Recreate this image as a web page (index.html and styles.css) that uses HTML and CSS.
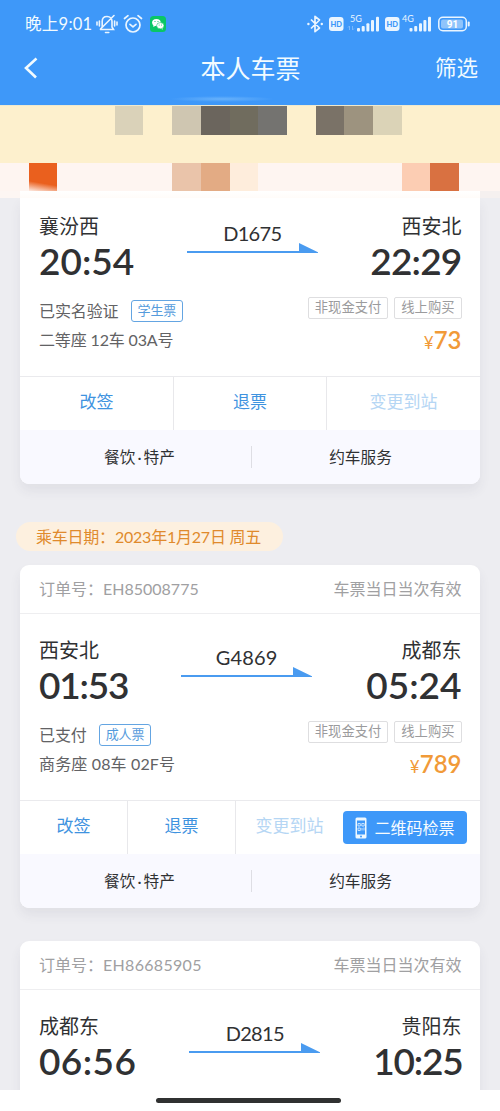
FILE: index.html
```html
<!DOCTYPE html>
<html lang="zh-CN">
<head>
<meta charset="utf-8">
<title>本人车票</title>
<link rel="stylesheet" href="styles.css">
</head>
<body>
<svg class="defs" width="0" height="0">
  <symbol id="arrow" viewBox="0 0 131 11"><path d="M0 8H112V0L131 9.3V10H0Z"/></symbol>
</svg>
<div class="screen">
  <header class="top">
    <div class="status">
      <span class="clock">晚上9:01</span>
      <svg class="mute" width="22" height="20" viewBox="0 0 22 20" fill="none" stroke="#eaf5ff" stroke-width="1.6" stroke-linecap="round"><path d="M5 15.5H17.5L16 13V7.5C16 4.5 14 2.5 11 2.5C8 2.5 6.2 4.5 6.2 7.5V13L4.5 15.5M9.5 18.5H12.8M18 1.5L4.5 15M1 8V11M3.4 7V12M18.6 7V12M21 8V11"/></svg>
      <svg class="alarm" width="20" height="20" viewBox="0 0 20 20" fill="none" stroke="#eaf5ff" stroke-width="1.7" stroke-linecap="round" stroke-linejoin="round"><circle cx="10" cy="11" r="7"/><path d="M1.5 4.5L5 1.7M18.5 4.5L15 1.7M7 10.3L10 12.8L13 10.3"/></svg>
      <svg class="wechat" width="16" height="16" viewBox="0 0 16 16"><rect width="16" height="16" rx="3.5" fill="#0ac665"/><ellipse cx="6.4" cy="6.5" rx="4.3" ry="3.6" fill="#fff"/><path d="M3.6 8L3.3 11L6 9.5ZM12 11L13 13.5L9.6 12.6Z" fill="#fff"/><ellipse cx="10.3" cy="9.7" rx="3.7" ry="3.1" fill="#fff" stroke="#0ac665" stroke-width=".6"/><g fill="#0ac665"><circle cx="5" cy="5.5" r=".6"/><circle cx="8" cy="5.5" r=".6"/><circle cx="9.1" cy="9" r=".5"/><circle cx="11.5" cy="9" r=".5"/></g></svg>
      <span class="fill"></span>
      <svg class="signals" width="165" height="22" viewBox="0 0 165 22">
        <g fill="none" stroke="#eaf5ff" stroke-width="1.7" stroke-linejoin="round"><path d="M4 6.5L12.5 15L8 18.7V3.3L12.5 7L4 15.5"/></g>
        <g fill="#eaf5ff"><circle cx="1.4" cy="11" r="1.2"/><circle cx="14.8" cy="11" r="1.2"/>
        <rect x="22" y="4" width="14.5" height="14" rx="3"/><rect x="78" y="4" width="14.5" height="14" rx="3"/>
        <rect x="50" y="15" width="3" height="3.5" rx="1"/><rect x="54.7" y="13" width="3" height="5.5" rx="1"/><rect x="59.4" y="10.3" width="3" height="8.2" rx="1"/><rect x="64" y="7" width="3" height="11.5" rx="1"/><rect x="69" y="3.8" width="3" height="14.7" rx="1"/>
        <rect x="102.5" y="15" width="3" height="3.5" rx="1"/><rect x="107.2" y="13" width="3" height="5.5" rx="1"/><rect x="112" y="10.3" width="3" height="8.2" rx="1"/><rect x="116.4" y="7" width="3" height="11.5" rx="1"/><rect x="121" y="3.8" width="3" height="14.7" rx="1"/>
        <rect x="160.7" y="8.5" width="2" height="5" rx="1"/></g>
        <rect x="131.8" y="4.3" width="27.5" height="13.4" rx="4" fill="none" stroke="#eaf5ff" stroke-width="1.5"/><rect x="134" y="6.5" width="22" height="9" rx="2" fill="#8fc4fb"/>
        <text class="hd" x="29.2" y="14">HD</text><text class="hd" x="85.2" y="14">HD</text>
        <text class="net" x="43" y="8.7">5G</text><text class="net" x="95" y="8.7">4G</text>
        <text class="level" x="145.5" y="14.5">91</text>
        <path d="M42.5 17V13M42.5 13L41 14.5M45.5 13V17M45.5 17L47 15.5" stroke="#78b9fc" fill="none"/>
      </svg>
    </div>
    <nav class="nav">
      <svg width="16" height="22" viewBox="0 0 16 22" fill="none" stroke="#f2fbff" stroke-width="2.6"><path d="M13.5 1.5L3 11L13 20.5"/></svg>
      <h1>本人车票</h1>
      <span class="filter">筛选</span>
    </nav>
  </header>
  <div class="mosaic upper">
    <i></i><i></i><i></i><i></i><i class="t1"></i><i></i><i class="t2"></i><i class="t3"></i><i class="t4"></i><i class="t5"></i><i></i><i class="t6"></i><i class="t7"></i><i class="t8"></i>
  </div>
  <div class="mosaic lower">
    <i></i><i class="o1"></i><i></i><i></i><i></i><i></i><i class="o2"></i><i class="o3"></i><i class="o4"></i><i></i><i></i><i></i><i></i><i></i><i class="o5"></i><i class="o6"></i>
  </div>
  <div class="fade"></div>
  <main class="list">
    <section class="card first">
      <div class="body">
        <div class="route">
          <div class="stop"><div class="station">襄汾西</div><div class="time">20:54</div></div>
          <div class="train"><span>D1675</span><svg class="arrow"><use href="#arrow"/></svg></div>
          <div class="stop end"><div class="station">西安北</div><div class="time snug">22:29</div></div>
        </div>
        <div class="detail">
          <div class="info"><div class="paid">已实名验证<span class="kind">学生票</span></div><div class="seat">二等座 12车 03A号</div></div>
          <div class="pay"><div class="tags"><span>非现金支付</span><span>线上购买</span></div><div class="price"><small>¥</small>73</div></div>
        </div>
      </div>
      <div class="actions three"><span>改签</span><span>退票</span><span class="off">变更到站</span></div>
      <div class="services"><span>餐饮<b>·</b>特产</span><span>约车服务</span></div>
    </section>
    <div class="date">乘车日期：2023年1月27日 周五</div>
    <section class="card second">
      <div class="order"><span>订单号：EH85008775</span><span>车票当日当次有效</span></div>
      <div class="body">
        <div class="route">
          <div class="stop"><div class="station">西安北</div><div class="time tight">01:53</div></div>
          <div class="train wide"><span>G4869</span><svg class="arrow"><use href="#arrow"/></svg></div>
          <div class="stop end"><div class="station">成都东</div><div class="time">05:24</div></div>
        </div>
        <div class="detail">
          <div class="info"><div class="paid">已支付<span class="kind">成人票</span></div><div class="seat loose">商务座 08车 02F号</div></div>
          <div class="pay"><div class="tags"><span>非现金支付</span><span>线上购买</span></div><div class="price"><small>¥</small>789</div></div>
        </div>
      </div>
      <div class="actions four"><span>改签</span><span>退票</span><span class="off">变更到站</span>
        <span class="qr"><svg width="12" height="22" viewBox="0 0 12 22"><rect x=".5" y=".5" width="11" height="21" rx="1.5" fill="#eef8ff"/><rect x="2" y="3.5" width="8" height="14" fill="#3e98f9"/><g fill="none" stroke="#d5eaff" stroke-width=".9"><path d="M3 6.5H5.3V9H3ZM6.8 6.5H9.2V9H6.8ZM3 11H5.3V13.5H3ZM7 11V13.5M9 10.5V13.5"/></g><circle cx="6" cy="19.5" r="1" fill="#3e98f9"/></svg>二维码检票</span>
      </div>
      <div class="services"><span>餐饮<b>·</b>特产</span><span>约车服务</span></div>
    </section>
    <section class="card third">
      <div class="order"><span>订单号：<em>EH86685905</em></span><span>车票当日当次有效</span></div>
      <div class="body">
        <div class="route">
          <div class="stop"><div class="station">成都东</div><div class="time roomy">06:56</div></div>
          <div class="train"><span>D2815</span><svg class="arrow"><use href="#arrow"/></svg></div>
          <div class="stop end"><div class="station">贵阳东</div><div class="time tight">10:25</div></div>
        </div>
      </div>
    </section>
  </main>
  <footer class="home"><i></i></footer>
</div>
</body>
</html>
```
FILE: styles.css
```css
* { box-sizing: border-box; }
body { margin: 0; font-family: Lato, "Noto Sans CJK SC", sans-serif; color: #303133; }
.defs { position: absolute; }
.screen { width: 500px; height: 1111px; overflow: hidden; background: #ededf1; display: flex; flex-direction: column; white-space: nowrap; }

.top { height: 105px; flex: none; background: radial-gradient(ellipse 52px 3px at 222px 99px, #68b2fb, transparent), #3e98f9; color: #f2fbff; }
.status { height: 44px; padding: 3px 31px 0 25px; display: flex; align-items: center; }
.clock { width: 71px; font-size: 16.6px; line-height: 22px; letter-spacing: .2px; }
.alarm { margin-left: 5px; }
.wechat { margin-left: 7px; }
.fill { flex: 1; }
.signals { margin-right: -3px; flex: none; }
.hd { font: 900 7.5px Lato, sans-serif; fill: #3e98f9; text-anchor: middle; }
.net { font: 400 9px Lato, sans-serif; fill: #eaf5ff; }
.level { font: 700 10px Roboto, sans-serif; fill: #fff; text-anchor: middle; }
.nav { height: 48px; padding: 0 22px 0 23px; display: grid; grid-template-columns: 1fr auto 1fr; align-items: center; }
.nav h1 { margin: 0; font-size: 25px; line-height: 36px; font-weight: 400; }
.filter { justify-self: end; font-size: 21.5px; line-height: 32px; }

.mosaic { flex: none; display: flex; }
.mosaic i { width: 28.7px; height: 28.5px; flex: none; }
.upper { height: 58px; background: #fdf0cd; border-top: 1px solid #eee9cf; }
.lower { height: 28px; background: #fef5f1; }
.t1 { background: #dad2b9; } .t2 { background: #cfc6b1; } .t3 { background: #6b655d; } .t4 { background: #706c5e; }
.t5 { background: #747370; } .t6 { background: #7a7267; } .t7 { background: #9d937f; } .t8 { background: #dbd3b7; }
.o1 { background: linear-gradient(190deg, #ea601e 67%, #fef0ea 98%); } .o2 { background: #eac4aa; } .o3 { background: #e3ab84; }
.o4 { background: #feeddc; } .o5 { background: #fccdb3; } .o6 { background: #d97141; }
.fade { height: 7px; flex: none; background: linear-gradient(90deg, #fdf6f3 20px, transparent 20px 480px, #f5f0ef 480px), linear-gradient(#fff, #fffcf9); }

.list { height: 892px; flex: none; overflow: hidden; padding: 0 20px; }
.card { background: #fff; border-radius: 9px; box-shadow: 0 7px 12px rgba(60, 60, 80, .07); overflow: hidden; }
.first { height: 286px; border-radius: 0 0 9px 9px; }
.second { height: 343px; }
.third { height: 170px; margin-top: 33px; }
.order { height: 49px; padding: 0 18.5px 0 19px; display: flex; justify-content: space-between; font-size: 16px; line-height: 48px; color: #a0a0a2; border-bottom: 1px solid #eeeef0; }
.order em { font-style: normal; letter-spacing: .3px; }
.body { height: 186px; padding: 21px 18.5px 0 19px; }
.first .body { height: 178px; padding-top: 13px; }
.route { height: 73px; display: flex; justify-content: space-between; }
.station { height: 30px; font-size: 20px; line-height: 30px; }
.time { height: 40px; font-size: 37px; line-height: 40px; font-weight: 600; }
.tight { letter-spacing: -1.2px; margin-right: -1.2px; }
.snug { letter-spacing: -.8px; }
.roomy { letter-spacing: .4px; }
.end { text-align: right; }
.end .tight { margin-right: -1px; }
.train { display: flex; flex-direction: column; align-items: center; font-size: 20px; letter-spacing: -.7px; }
.wide { letter-spacing: .2px; }
.train span { height: 32px; line-height: 44px; }
.arrow { width: 131px; height: 11px; fill: #4a9bf0; }
.detail { display: flex; justify-content: space-between; font-size: 16px; color: #626264; }
.info { padding-top: 16px; }
.paid { height: 22px; display: flex; align-items: center; gap: 12.5px; line-height: 20px; letter-spacing: -.1px; }
.kind { height: 22px; padding: 0 5.5px; border: 1.5px solid #64a5e2; border-radius: 3px; font-size: 13px; line-height: 19px; color: #559bdc; }
.seat { margin-top: 6px; height: 24px; line-height: 24px; letter-spacing: -.15px; }
.loose { letter-spacing: .15px; }
.pay { padding-top: 13px; text-align: right; }
.tags { display: flex; gap: 6px; }
.tags span { height: 22px; padding: 0 6px; border: 1px solid #dedee0; border-radius: 2px; font-size: 13.3px; line-height: 19px; color: #9b9b9d; }
.price { margin-top: 6px; height: 30px; font-size: 24px; line-height: 30px; font-weight: 600; color: #f19a38; }
.price small { font-size: 17px; font-weight: 400; }
.actions { height: 54px; display: grid; border-top: 1px solid #eaeaed; font-size: 17px; line-height: 50px; font-weight: 400; color: #3f93df; text-align: center; }
.actions > span + span { border-left: 1px solid #e8e8eb; }
.three { grid-template-columns: 153px 153px 1fr; }
.four { grid-template-columns: 107px 108px 108px 124px; }
.actions .off { color: #b5d6f4; }
.actions .qr { height: 33px; margin-top: 10px; border: 0; border-radius: 4px; background: #3e98f9; color: #f7fcff; font-size: 16px; line-height: 31px; display: flex; align-items: center; justify-content: center; gap: 7px; }
.services { height: 54px; background: #f9f9ff; display: grid; grid-template-columns: 232px 1fr; align-items: center; font-size: 15.7px; line-height: 22px; text-align: center; }
.services span:first-child { padding-left: 8px; border-right: 1px solid #dedee4; }
.services span:last-child { padding-right: 11px; }
.services b { padding: 0 2px; font-weight: 400; }
.date { width: 267px; height: 29px; margin: 38px 0 14px -4px; padding-left: 20px; border-radius: 15px; background: #fdf0df; color: #e08a2c; font-size: 16px; line-height: 29px; letter-spacing: -.22px; }
.home { flex: 1; padding: 8px 0 0 156px; background: #fff; }
.home i { display: block; width: 185px; height: 5px; border-radius: 3px; background: #303131; }
```
